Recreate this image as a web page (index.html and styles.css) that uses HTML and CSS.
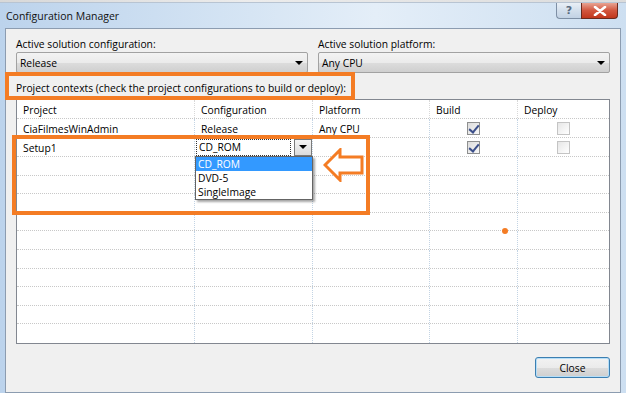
FILE: index.html
```html
<!doctype html>
<html>
    <head>
        <meta charset=utf-8>
        <title>Configuration Manager</title>
        <link rel="stylesheet" href="styles.css">
    </head>
    <body>
        <div class="behind"></div>
        <div class="window">
            <div class="titlebar">
                <span class="title">Configuration Manager</span>
                <div class="controls">
                    <span class="btn-help">?</span>
                    <span class="btn-close">
                        <svg width="14" height="10" viewBox="0 0 14 10"><path d="M2 1 L12 9 M12 1 L2 9" stroke="#fff" stroke-width="2.6" stroke-linecap="round"/></svg>
                    </span>
                </div>
            </div>

            <div class="client">
                <div class="solution">
                    <div class="field">
                        <label>Active solution configuration:</label>
                        <div class="combo"><span>Release</span><i class="tri"></i></div>
                    </div>
                    <div class="field">
                        <label>Active solution platform:</label>
                        <div class="combo"><span>Any CPU</span><i class="tri"></i></div>
                    </div>
                </div>

                <div class="contexts">Project contexts (check the project configurations to build or deploy):</div>

                <div class="grid">
                    <div class="row head">
                        <div class="cell">Project</div>
                        <div class="cell">Configuration</div>
                        <div class="cell">Platform</div>
                        <div class="cell">Build</div>
                        <div class="cell">Deploy</div>
                    </div>
                    <div class="row">
                        <div class="cell">CiaFilmesWinAdmin</div>
                        <div class="cell">Release</div>
                        <div class="cell">Any CPU</div>
                        <div class="cell center"><span class="check on"></span></div>
                        <div class="cell center"><span class="check"></span></div>
                    </div>
                    <div class="row">
                        <div class="cell">Setup1</div>
                        <div class="cell edit">
                            <div class="cell-combo">
                                <span class="focus">CD_ROM</span>
                                <span class="drop"><i class="tri"></i></span>
                            </div>
                            <ul class="list">
                                <li class="sel">CD_ROM</li>
                                <li>DVD-5</li>
                                <li>SingleImage</li>
                            </ul>
                        </div>
                        <div class="cell"></div>
                        <div class="cell center"><span class="check on"></span></div>
                        <div class="cell center"><span class="check"></span></div>
                    </div>
                    <div class="row"><div class="cell"></div><div class="cell"></div><div class="cell"></div><div class="cell"></div><div class="cell"></div></div>
                    <div class="row"><div class="cell"></div><div class="cell"></div><div class="cell"></div><div class="cell"></div><div class="cell"></div></div>
                    <div class="row"><div class="cell"></div><div class="cell"></div><div class="cell"></div><div class="cell"></div><div class="cell"></div></div>
                    <div class="row"><div class="cell"></div><div class="cell"></div><div class="cell"></div><div class="cell"></div><div class="cell"></div></div>
                    <div class="row"><div class="cell"></div><div class="cell"></div><div class="cell"></div><div class="cell"></div><div class="cell"></div></div>
                    <div class="row"><div class="cell"></div><div class="cell"></div><div class="cell"></div><div class="cell"></div><div class="cell"></div></div>
                    <div class="row"><div class="cell"></div><div class="cell"></div><div class="cell"></div><div class="cell"></div><div class="cell"></div></div>
                    <div class="row"><div class="cell"></div><div class="cell"></div><div class="cell"></div><div class="cell"></div><div class="cell"></div></div>
                    <div class="row"><div class="cell"></div><div class="cell"></div><div class="cell"></div><div class="cell"></div><div class="cell"></div></div>
                    <div class="row last"><div class="cell"></div><div class="cell"></div><div class="cell"></div><div class="cell"></div><div class="cell"></div></div>
                </div>

                <div class="footer">
                    <button class="close">Close</button>
                </div>
            </div>
        </div>

        <!-- annotations drawn over the screenshot -->
        <div class="mark mark-contexts"></div>
        <div class="mark mark-row"></div>
        <svg class="arrow" width="42" height="34" viewBox="0 0 42 34">
            <path d="M2 17 L17 2 L17 9 L39 9 L39 25 L17 25 L17 32 Z" fill="#fff" stroke="#f47c24" stroke-width="3" stroke-linejoin="miter"/>
        </svg>
        <span class="dot"></span>
    </body>
</html>
```

FILE: styles.css
```css
* {
  padding: 0;
  margin: 0;
  box-sizing: border-box;
}

ul {
  list-style: none;
}

body {
  width: 626px;
  height: 393px;
  overflow: hidden;
  position: relative;
  font: 10.3px/16px "Open Sans", sans-serif;
  color: #000;
  background: linear-gradient(90deg, #bcd3ec 0%, #d6e5f4 40%, #e4eef8 60%, #cddff1 100%);
}

.behind {
  height: 3px;
  background: linear-gradient(90deg, #d8d8d8, #ececec 40%, #dcdcdc);
  border-bottom: 1px solid #b8c4d2;
}

.window {
  display: flex;
  flex-direction: column;
  height: 390px;
}

.titlebar {
  height: 25px;
  display: flex;
  justify-content: space-between;
  align-items: flex-start;
  padding: 0 8px 0 6px;
}

.title {
  margin-top: 5px;
  font-size: 10.5px;
  color: #111;
}

.controls {
  display: flex;
}

.btn-help,
.btn-close {
  height: 16px;
  display: flex;
  align-items: center;
  justify-content: center;
  border: 1px solid #7e8fa5;
  border-top: none;
}

.btn-help {
  width: 25px;
  border-radius: 0 0 0 4px;
  border-right: none;
  background: linear-gradient(#e9eff6, #d3dfec 50%, #c2d2e4);
  color: #5a6b80;
  font: bold 11px/1 "DejaVu Sans", sans-serif;
}

.btn-close {
  width: 37px;
  border-radius: 0 0 4px 0;
  border-color: #6a2a1e;
  background: linear-gradient(#e8a493, #d2563e 50%, #c1371d);
}

.client {
  flex: 1;
  margin: 0 5px 0 5px;
  border: 1px solid #8c9cb0;
  background: #f0f0f0;
  padding: 7px 10px 0 10px;
  display: flex;
  flex-direction: column;
}

.solution {
  display: flex;
  gap: 10px;
}

.field {
  width: 292px;
}

.field label {
  display: block;
  height: 16px;
}

.combo {
  height: 21px;
  border: 1px solid #a2a2a2;
  border-radius: 2px;
  background: linear-gradient(#f3f3f3, #ebebeb 50%, #dddddd 50%, #cfcfcf);
  display: flex;
  align-items: center;
  justify-content: space-between;
  padding: 0 4px 0 3px;
}

.tri {
  width: 0;
  height: 0;
  border-left: 4px solid transparent;
  border-right: 4px solid transparent;
  border-top: 4px solid #000;
}

.contexts {
  margin-top: 7px;
  height: 19px;
}

.grid {
  height: 245px;
  border: 1px solid #828790;
  background: #fff;
  display: grid;
  grid-template-rows: repeat(13, 1fr);
}

.row {
  display: grid;
  grid-template-columns: 178px 118px 117px 88px 91px;
  border-bottom: 1px dotted #c8c8c8;
}

.row.last {
  border-bottom: none;
}

.cell {
  border-right: 1px dotted #c3d4e4;
  padding: 2px 6px 0;
  display: flex;
  align-items: center;
  white-space: nowrap;
}

.cell:last-child {
  border-right: none;
}

.cell.center {
  justify-content: center;
  padding-top: 0;
}

.head .cell {
  border-right-color: #d8d8d8;
}

.check {
  width: 13px;
  height: 13px;
  border: 1px solid #c4c4c4;
  background: linear-gradient(135deg, #e6e6e6, #ffffff);
  position: relative;
}

.check.on {
  border-color: #8e8f8f;
  background: linear-gradient(135deg, #dcdcdc, #f8f8f8);
}

.check.on::after {
  content: "";
  position: absolute;
  left: 3px;
  top: 0px;
  width: 4px;
  height: 8px;
  border: solid #3c4f8a;
  border-width: 0 2px 2px 0;
  transform: rotate(40deg);
}

.cell.edit {
  position: relative;
  padding: 0 0 0 1px;
  overflow: visible;
}

.cell-combo {
  display: flex;
  align-items: center;
  gap: 3px;
  width: 100%;
}

.focus {
  flex: 1;
  height: 17px;
  line-height: 15px;
  border: 1px dotted #333;
  padding-left: 2px;
}

.drop {
  width: 18px;
  height: 17px;
  border: 1px solid #7a7a7a;
  background: linear-gradient(#f4f4f4, #dcdcdc);
  display: flex;
  align-items: center;
  justify-content: center;
}

.list {
  position: absolute;
  top: 18px;
  left: 0;
  width: 118px;
  border: 1px solid #646464;
  background: #fff;
  box-shadow: 2px 2px 2px rgba(0, 0, 0, 0.35);
  padding: 0;
  z-index: 2;
}

.list li {
  height: 14px;
  line-height: 14px;
  padding-left: 2px;
}

.list li.sel {
  background: #3399ff;
  color: #fff;
}

.footer {
  display: flex;
  justify-content: flex-end;
  padding-top: 13px;
}

.close {
  width: 75px;
  height: 21px;
  font: inherit;
  border: 1px solid #3c7fb1;
  border-radius: 3px;
  background: linear-gradient(#f2f2f2, #ebebeb 50%, #dddddd 50%, #cfcfcf);
  box-shadow: inset 0 0 0 1px #b5def8;
}

.mark {
  position: absolute;
  border: 4px solid #f47c24;
}

.mark-contexts {
  left: 5px;
  top: 72px;
  width: 350px;
  height: 28px;
}

.mark-row {
  left: 12px;
  top: 135px;
  width: 358px;
  height: 80px;
}

.arrow {
  position: absolute;
  left: 323px;
  top: 148px;
}

.dot {
  position: absolute;
  left: 502px;
  top: 228px;
  width: 6px;
  height: 6px;
  border-radius: 50%;
  background: #f47c24;
}
```
